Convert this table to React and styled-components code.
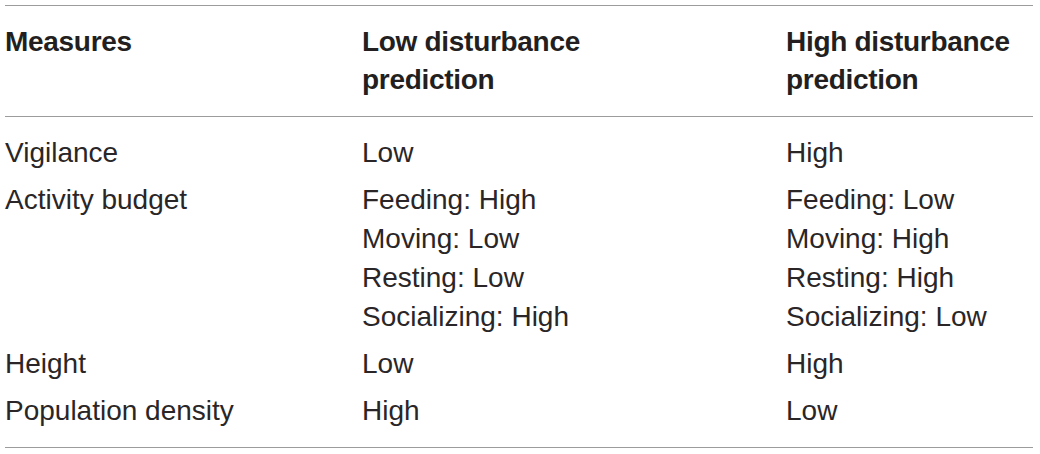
import styled, { createGlobalStyle } from "styled-components";

const GlobalStyle = createGlobalStyle`
  body {
    margin: 0;
    background: #fff;
  }
`;

const rows = [
  { measure: "Vigilance", low: ["Low"], high: ["High"] },
  {
    measure: "Activity budget",
    low: ["Feeding: High", "Moving: Low", "Resting: Low", "Socializing: High"],
    high: ["Feeding: Low", "Moving: High", "Resting: High", "Socializing: Low"],
  },
  { measure: "Height", low: ["Low"], high: ["High"] },
  { measure: "Population density", low: ["High"], high: ["Low"] },
];

export default function App() {
  return (
    <>
      <GlobalStyle />
      <Table>
        <HeadRow>
          <HeadCell>Measures</HeadCell>
          <HeadCell>
            Low disturbance
            <br />
            prediction
          </HeadCell>
          <HeadCell>
            High disturbance
            <br />
            prediction
          </HeadCell>
        </HeadRow>
        <Body>
          {rows.map((r) => (
            <Row key={r.measure}>
              <Cell>{r.measure}</Cell>
              <Cell>
                {r.low.map((t) => (
                  <Line key={t}>{t}</Line>
                ))}
              </Cell>
              <Cell>
                {r.high.map((t) => (
                  <Line key={t}>{t}</Line>
                ))}
              </Cell>
            </Row>
          ))}
        </Body>
      </Table>
    </>
  );
}

const Table = styled.div`
  margin: 5px 0 0 5px;
  width: 1028px;
  border-top: 1.5px solid #9c9c9c;
  border-bottom: 1.5px solid #9c9c9c;
  font-family: "Liberation Sans", Arial, sans-serif;
  color: #231f20;
`;

const HeadRow = styled.div`
  display: grid;
  grid-template-columns: 357px 424px 1fr;
  padding: 17px 0 17px;
  border-bottom: 1.5px solid #9c9c9c;
`;

const HeadCell = styled.div`
  font-size: 28px;
  font-weight: 700;
  line-height: 38px;
  letter-spacing: -0.3px;
`;

const Body = styled.div`
  padding: 12px 0 13px;
`;

const Row = styled.div`
  display: grid;
  grid-template-columns: 357px 424px 1fr;
  padding: 4px 0;
`;

const Cell = styled.div`
  font-size: 28px;
  line-height: 39px;
  letter-spacing: 0;
  color: #2a2627;
`;

const Line = styled.div``;
